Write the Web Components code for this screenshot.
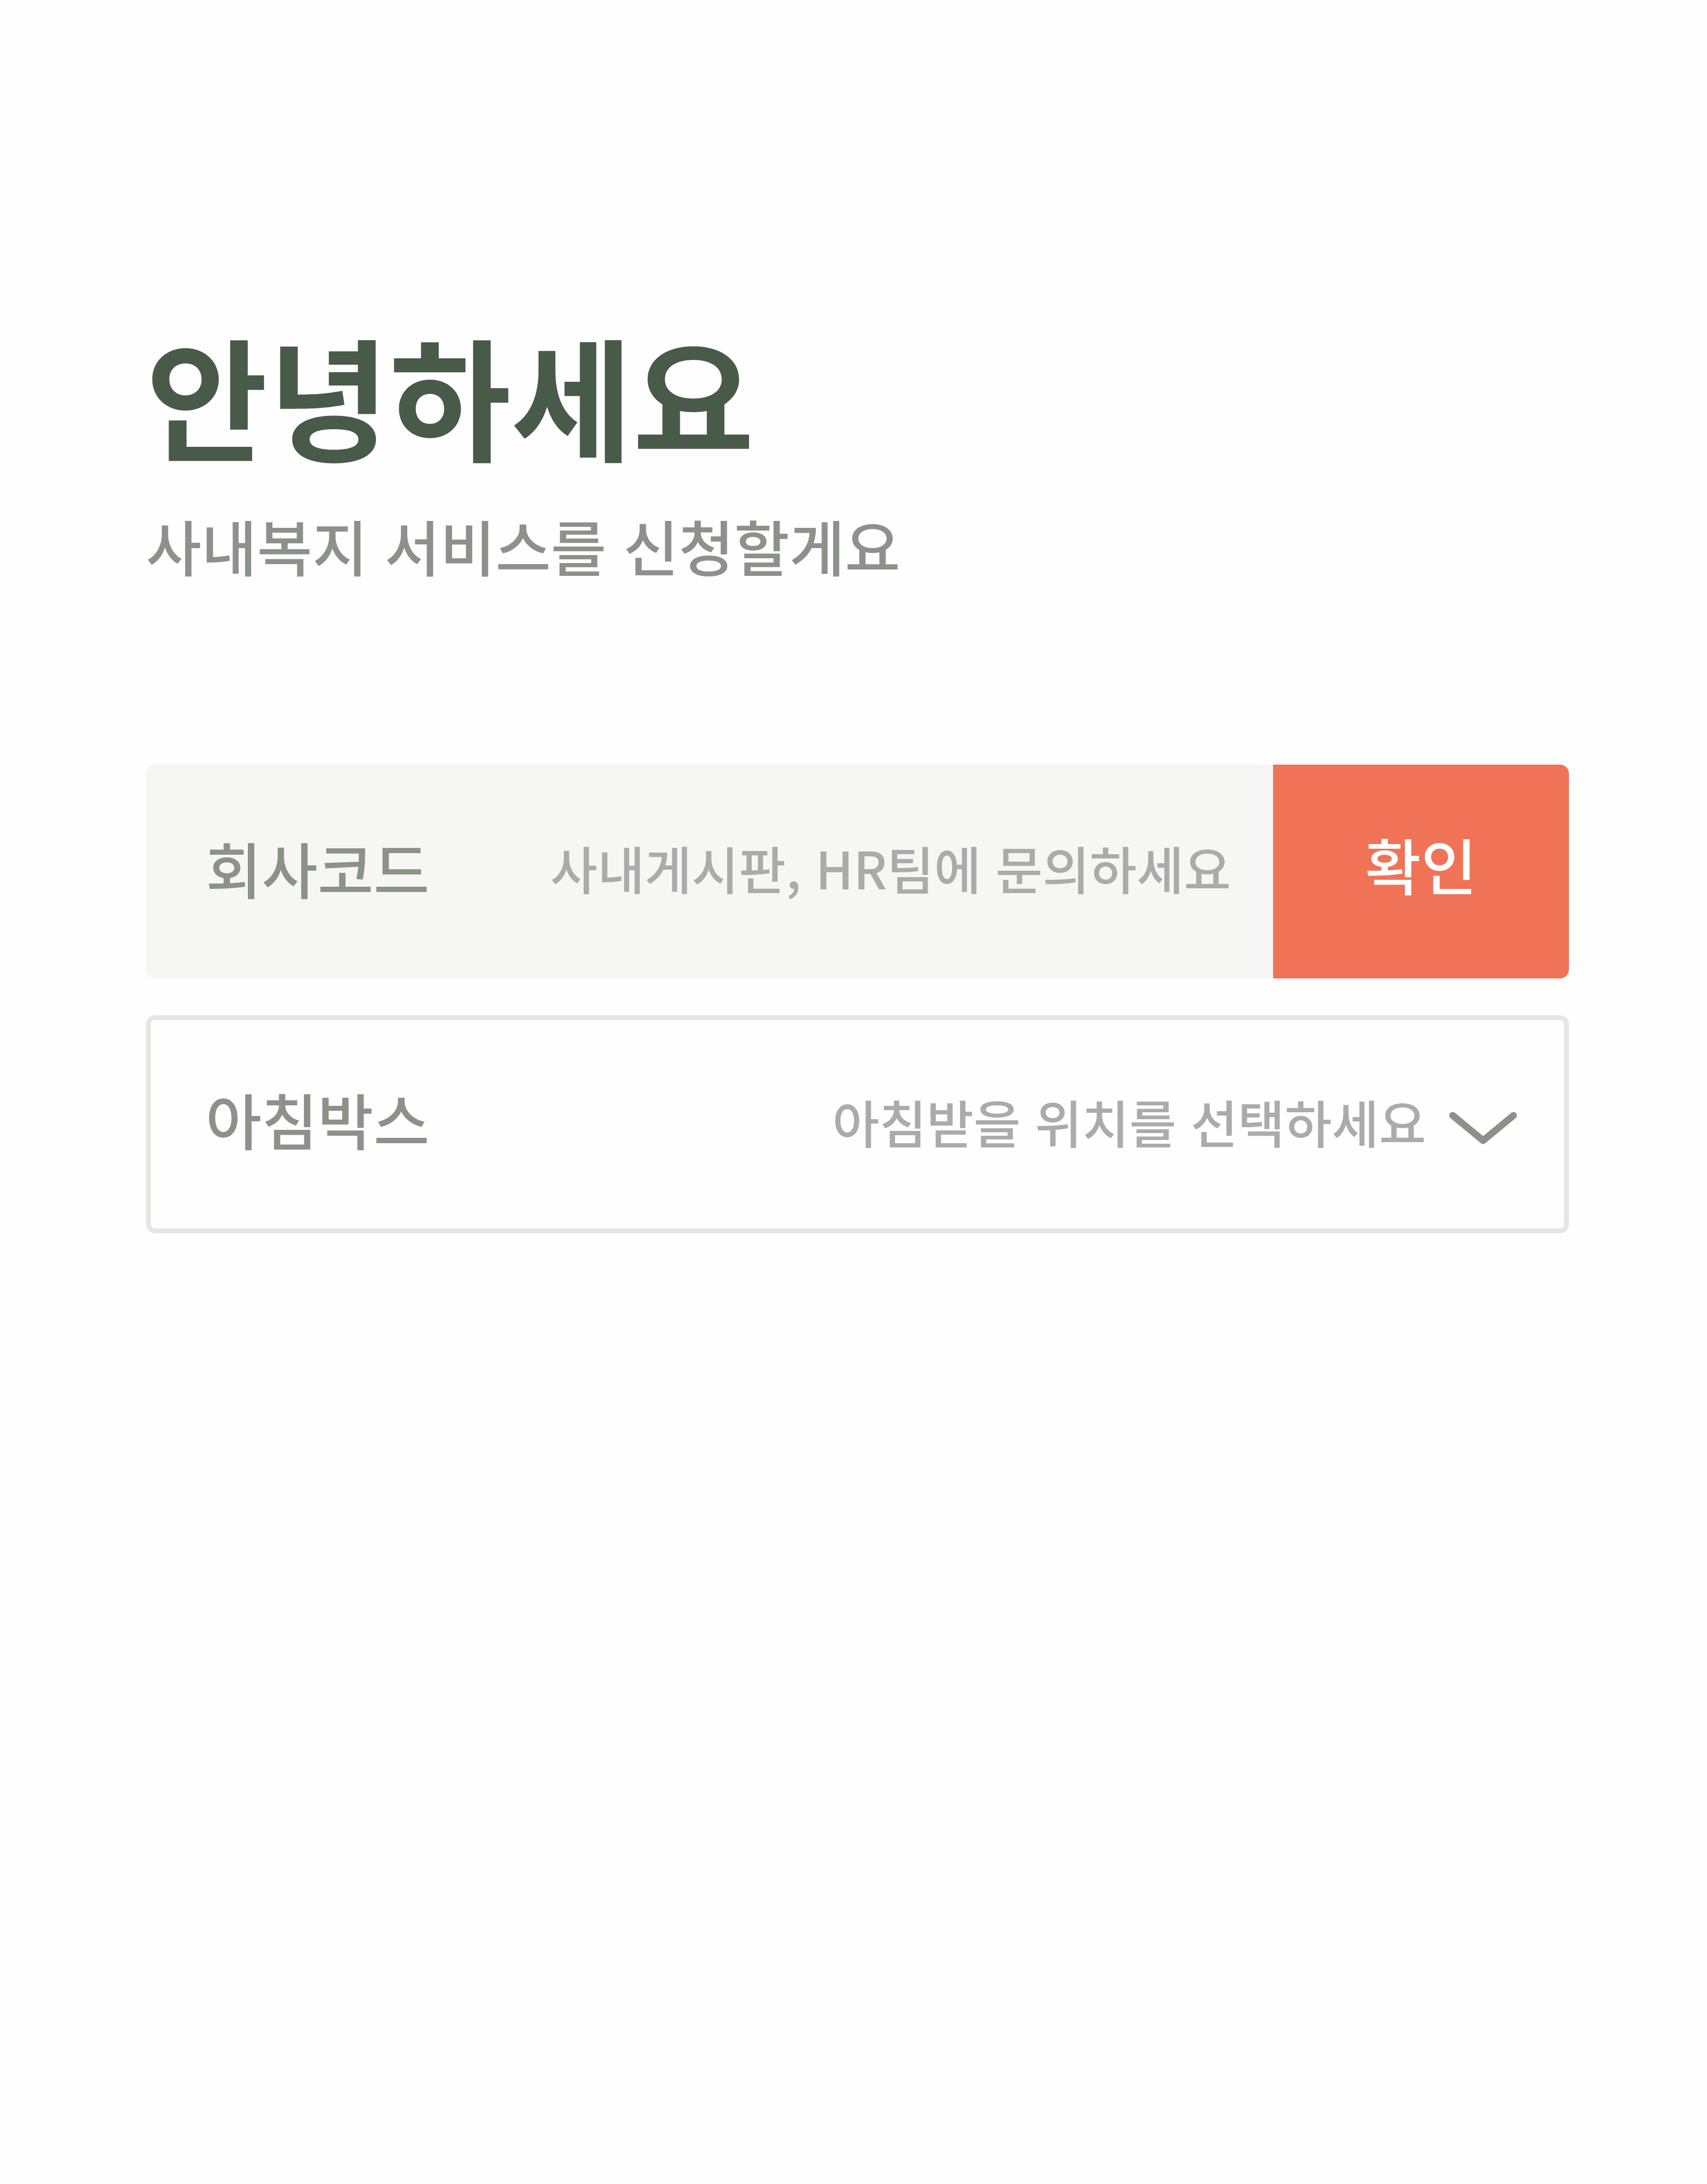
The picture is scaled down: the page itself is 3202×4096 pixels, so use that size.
<!DOCTYPE html>
<html lang="ko">
<head>
<meta charset="utf-8">
<title>사내복지 서비스 신청</title>
<style>
  body {
    margin: 0;
    background: #fefefe;
    font-family: "Noto Sans CJK KR", "Noto Sans", sans-serif;
    --ink: #485a48;
    --muted: #8c918a;
    --hint: #ababab;
    --fill: #f6f6f4;
    --line: #e1e8e1;
    --accent: #f07357;
    --label-size: 114px;
    --hint-size: 96px;
    --radius: 17px;
  }
</style>
</head>
<body>
<signup-page>
  <page-greeting slot="greeting">
    <span slot="title">안녕하세요</span>
    <span slot="subtitle">사내복지 서비스를 신청할게요</span>
  </page-greeting>
  <code-field placeholder="사내게시판, HR팀에 문의하세요">
    <span slot="label">회사코드</span>
    <span slot="action">확인</span>
  </code-field>
  <place-field placeholder="아침받을 위치를 선택하세요">
    <span slot="label">아침박스</span>
  </place-field>
</signup-page>

<template id="signup-page">
  <style>
    :host { display: block; }
    main { padding: 588px 259px 200px 274px; }
    form { display: flex; flex-direction: column; gap: 69px; margin: 327px 0 0; }
  </style>
  <main>
    <slot name="greeting"></slot>
    <form><slot></slot></form>
  </main>
</template>

<template id="page-greeting">
  <style>
    :host { display: block; }
    h1, p { margin: 0; }
    h1 { font-size: 248px; font-weight: 700; line-height: 300px; color: var(--ink); }
    p { margin-top: 49px; font-size: 113px; font-weight: 500; line-height: 170px; color: var(--muted); }
  </style>
  <h1><slot name="title"></slot></h1>
  <p><slot name="subtitle"></slot></p>
</template>

<template id="code-field">
  <style>
    :host { display: flex; height: 401px; border-radius: var(--radius); overflow: hidden; background: var(--fill); }
    .entry { flex: 1; min-width: 0; display: flex; align-items: center; padding: 0 79px 16px 112px; }
    label { flex: none; font-size: var(--label-size); font-weight: 500; color: var(--muted); }
    input {
      flex: 1; min-width: 0; box-sizing: border-box; padding: 0; border: 0; outline: 0; background: none;
      font: inherit; font-size: var(--hint-size); font-weight: 500; text-align: right; color: var(--ink);
    }
    input::placeholder { color: var(--hint); opacity: 1; }
    button {
      flex: none; width: 555px; padding: 0 0 30px; border: 0; background: var(--accent); color: #fff;
      font: inherit; font-size: var(--label-size); font-weight: 500;
    }
  </style>
  <div class="entry">
    <label for="code"><slot name="label"></slot></label>
    <input id="code" type="text">
  </div>
  <button type="button"><slot name="action"></slot></button>
</template>

<template id="place-field">
  <style>
    :host {
      display: flex; align-items: center; gap: 43px; box-sizing: border-box; height: 409px;
      padding: 0 88px 0 103px; border: 9px solid var(--line); border-radius: var(--radius);
    }
    label { flex: none; padding-bottom: 22px; font-size: var(--label-size); font-weight: 500; color: var(--muted); }
    select {
      flex: 1; min-width: 0; appearance: none; padding: 0 0 12px; border: 0; outline: 0; background: none;
      font: inherit; font-size: var(--hint-size); font-weight: 500; text-align: right; text-align-last: right; color: var(--hint);
    }
    svg { flex: none; width: 128px; height: 61px; margin-top: 14px; }
  </style>
  <label for="place"><slot name="label"></slot></label>
  <select id="place"><option></option></select>
  <svg viewBox="0 0 128 61" fill="none" stroke="#8c918a" stroke-width="13" stroke-linecap="round" stroke-linejoin="round" aria-hidden="true"><path d="M7 7L64 54L121 7"/></svg>
</template>

<script>
  class TemplateElement extends HTMLElement {
    constructor() {
      super();
      const template = document.getElementById(this.localName);
      this.attachShadow({ mode: 'open' }).append(template.content.cloneNode(true));
    }
  }
  class SignupPage extends TemplateElement {}
  class PageGreeting extends TemplateElement {}
  class CodeField extends TemplateElement {
    connectedCallback() {
      this.shadowRoot.querySelector('input').placeholder = this.getAttribute('placeholder');
    }
  }
  class PlaceField extends TemplateElement {
    connectedCallback() {
      this.shadowRoot.querySelector('option').textContent = this.getAttribute('placeholder');
    }
  }
  customElements.define('signup-page', SignupPage);
  customElements.define('page-greeting', PageGreeting);
  customElements.define('code-field', CodeField);
  customElements.define('place-field', PlaceField);
</script>
</body>
</html>
